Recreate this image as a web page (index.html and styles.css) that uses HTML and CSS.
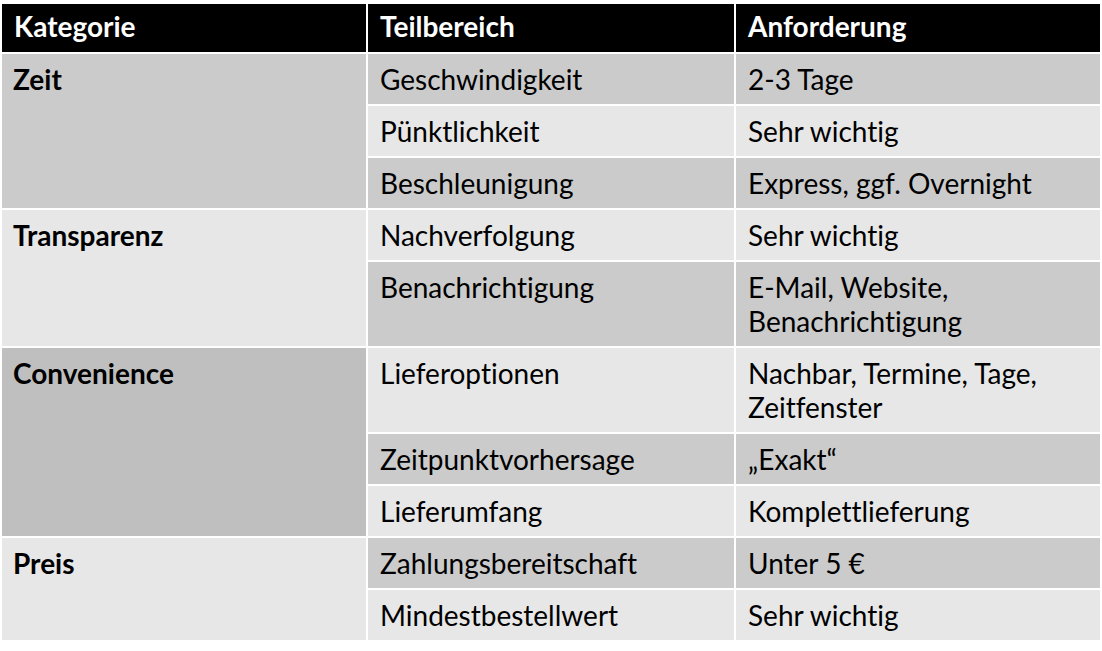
FILE: index.html
```html
<!DOCTYPE html>
<html lang="de">
<head>
<meta charset="utf-8">
<title>Anforderungen</title>
<link rel="stylesheet" href="styles.css">
</head>
<body>
<table class="req">
  <colgroup>
    <col class="c1">
    <col class="c2">
    <col class="c3">
  </colgroup>
  <thead>
    <tr><th>Kategorie</th><th>Teilbereich</th><th>Anforderung</th></tr>
  </thead>
  <tbody>
    <tr class="dark">
      <td class="cat cat-a" rowspan="3">Zeit</td>
      <td>Geschwindigkeit</td><td>2-3 Tage</td>
    </tr>
    <tr class="light"><td>Pünktlichkeit</td><td>Sehr wichtig</td></tr>
    <tr class="dark"><td>Beschleunigung</td><td>Express, ggf. Overnight</td></tr>
    <tr class="light">
      <td class="cat cat-b" rowspan="2">Transparenz</td>
      <td>Nachverfolgung</td><td>Sehr wichtig</td>
    </tr>
    <tr class="dark"><td>Benachrichtigung</td><td>E-Mail, Website,<br>Benachrichtigung</td></tr>
    <tr class="light">
      <td class="cat cat-c" rowspan="3">Convenience</td>
      <td>Lieferoptionen</td><td>Nachbar, Termine, Tage,<br>Zeitfenster</td>
    </tr>
    <tr class="dark"><td>Zeitpunktvorhersage</td><td>„Exakt“</td></tr>
    <tr class="light"><td>Lieferumfang</td><td>Komplettlieferung</td></tr>
    <tr class="dark">
      <td class="cat cat-b" rowspan="2">Preis</td>
      <td>Zahlungsbereitschaft</td><td>Unter 5 €</td>
    </tr>
    <tr class="light"><td>Mindestbestellwert</td><td>Sehr wichtig</td></tr>
  </tbody>
</table>
</body>
</html>
```

FILE: styles.css
```css
html, body {
  margin: 0;
  padding: 0;
  background: #ffffff;
}

body {
  padding-top: 2px;
  font-family: Lato, "Open Sans", "Liberation Sans", sans-serif;
  font-variant-ligatures: none;
  font-feature-settings: "liga" 0, "clig" 0, "dlig" 0;
  color: #000;
}

.req {
  table-layout: fixed;
  width: 1102px;
  border-collapse: separate;
  border-spacing: 2px;
  font-size: 28px;
  line-height: 34px;
}

.c1 { width: 364px; }
.c2 { width: 366px; }
.c3 { width: 364px; }

.req th,
.req td {
  text-align: left;
  vertical-align: top;
  white-space: nowrap;
  overflow: hidden;
}

.req th {
  background: #000;
  color: #fff;
  font-weight: 700;
  padding: 5px 11px 9px 12px;
}

.req td {
  padding: 8px 11px 8px 12px;
}

.req td.cat {
  font-weight: 700;
  padding-left: 11px;
}

.req tr.dark td { background: #cbcbcb; }
.req tr.light td { background: #e7e7e7; }

.req td.cat-a { background: #cbcbcb !important; }
.req td.cat-b { background: #e7e7e7 !important; }
.req td.cat-c { background: #bfbfbf !important; }
```
